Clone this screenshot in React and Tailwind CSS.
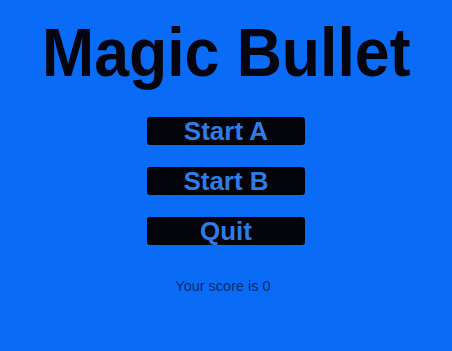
export default function App() {
  return (
    <div
      className="w-[452px] h-[351px] bg-[#0a6bf6] flex flex-col items-center overflow-hidden"
      style={{ fontFamily: '"Liberation Sans", Arial, sans-serif' }}
    >
      <h1 className="mt-[17px] text-[68px] leading-[70px] font-bold text-[#050510] scale-x-[0.92] whitespace-nowrap">
        Magic Bullet
      </h1>
      <div className="mt-[30px] flex flex-col gap-[22px]">
        {["Start A", "Start B", "Quit"].map((t) => (
          <button
            key={t}
            className="w-[158px] h-[28px] bg-[#03030a] rounded-[3px] text-[#2f7ce6] text-[26px] font-bold leading-[28px] flex items-center justify-center"
          >
            {t}
          </button>
        ))}
      </div>
      <p className="mt-[31px] mr-[6px] text-[14.5px] leading-[20px] text-[#0a2a6e]">Your score is 0</p>
    </div>
  );
}
